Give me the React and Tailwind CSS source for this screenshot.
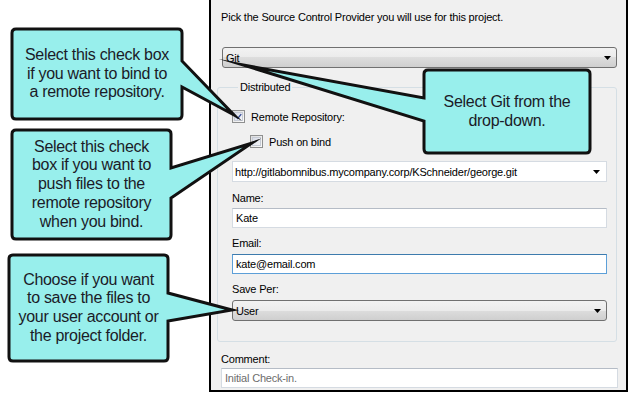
import React from "react";

const callouts = [
  { box: [12, 29, 182, 119], side: "right", a: 61, b: 87, tip: [234, 115], lines: ["Select this check box", "if you want to bind to", "a remote repository."] },
  { box: [12, 130, 171, 239], side: "right", a: 168, b: 198, tip: [252, 143], lines: ["Select this check", "box if you want to", "push files to the", "remote repository", "when you bind."] },
  { box: [9, 255, 168, 361], side: "right", a: 293, b: 321, tip: [232, 310], lines: ["Choose if you want", "to save the files to", "your user account or", "the project folder."] },
  { box: [424, 70, 590, 153], side: "left", a: 98, b: 121, tip: [243, 65], lines: ["Select Git from the", "drop-down."] },
];

function bubblePath({ box, side, a, b, tip }) {
  const [x1, y1, x2, y2] = box;
  const r = 4;
  const [tx, ty] = tip;
  if (side === "right") {
    return `M${x1 + r} ${y1} H${x2 - r} Q${x2} ${y1} ${x2} ${y1 + r} V${a} L${tx} ${ty} L${x2} ${b} V${y2 - r} Q${x2} ${y2} ${x2 - r} ${y2} H${x1 + r} Q${x1} ${y2} ${x1} ${y2 - r} V${y1 + r} Q${x1} ${y1} ${x1 + r} ${y1} Z`;
  }
  return `M${x1 + r} ${y1} H${x2 - r} Q${x2} ${y1} ${x2} ${y1 + r} V${y2 - r} Q${x2} ${y2} ${x2 - r} ${y2} H${x1 + r} Q${x1} ${y2} ${x1} ${y2 - r} V${b} L${tx} ${ty} L${x1} ${a} V${y1 + r} Q${x1} ${y1} ${x1 + r} ${y1} Z`;
}

function Arrow() {
  return (
    <svg width="7" height="4" viewBox="0 0 7 4" className="shrink-0">
      <path d="M0 0 H7 L3.5 4 Z" fill="#000" />
    </svg>
  );
}

function Dropdown({ value, className = "" }) {
  return (
    <div className={`flex items-center justify-between h-[21px] rounded-[3px] border border-[#707070] bg-[linear-gradient(#f2f2f2,#ebebeb_50%,#dddddd_50%,#cfcfcf)] pl-[3px] pr-[5px] ${className}`}>
      <span>{value}</span>
      <Arrow />
    </div>
  );
}

function TextBox({ value, className = "", border = "border-[#d5dbe2] border-t-[#b5bcc6]", textColor = "text-black" }) {
  return (
    <div className={`flex items-center h-[20px] bg-white border ${border} px-[3px] ${textColor} ${className}`}>
      {value}
    </div>
  );
}

function Checkbox({ checked }) {
  return (
    <div className="w-[13px] h-[13px] border border-[#8e8f8f] bg-[linear-gradient(135deg,#dcdcdc,#fbfbfb)] p-[1px] shrink-0">
      <div className="w-full h-full border border-[#c6cbd5] bg-[linear-gradient(135deg,#d7dbe6,#f4f6f8)] flex items-center justify-center">
        {checked && (
          <svg width="9" height="9" viewBox="0 0 9 9">
            <path d="M1 4.5 L3.5 7 L8 1.5" stroke="#3a4f97" strokeWidth="1.8" fill="none" />
          </svg>
        )}
      </div>
    </div>
  );
}

export default function App() {
  return (
    <div className="relative w-[629px] h-[394px] bg-white overflow-hidden font-['Liberation_Sans',Arial,sans-serif]">
      {/* Dialog panel */}
      <div className="ml-[209px] w-[419px] h-[392px] border-2 border-t-0 border-black bg-[#f0f0f0] pl-[6px] pr-[9px] text-[11px] leading-[14px] text-black tracking-[-0.2px]">
        <p className="pt-[10px] ml-[4px]">Pick the Source Control Provider you will use for this project.</p>
        <Dropdown value="Git" className="mt-[23px] ml-[5px]" />

        <fieldset className="mt-[12px] border border-[#d5dfe5] rounded-[3px] pl-[14px] pr-[9px] pb-[20px]">
          <legend className="ml-[6px] px-[2px]">Distributed</legend>
          <div className="flex items-center h-[13px] mt-[16px]">
            <Checkbox checked />
            <span className="ml-[6px]">Remote Repository:</span>
          </div>
          <div className="flex items-center h-[13px] mt-[12px] ml-[18px]">
            <Checkbox />
            <span className="ml-[6px]">Push on bind</span>
          </div>
          <div className="flex items-center justify-between h-[21px] mt-[13px] bg-white border border-[#d5dbe2] pl-[2px] pr-[6px]">
            <span>http://gitlabomnibus.mycompany.corp/KSchneider/george.git</span>
            <Arrow />
          </div>
          <p className="mt-[9px]">Name:</p>
          <TextBox value="Kate" className="mt-[3px]" />
          <p className="mt-[8px]">Email:</p>
          <TextBox value="kate@email.com" className="mt-[4px]" border="border-[#5c9fd8] border-t-[#3d7bad]" />
          <p className="mt-[8px]">Save Per:</p>
          <Dropdown value="User" className="mt-[4px]" />
        </fieldset>

        <p className="mt-[10px] ml-[4px]">Comment:</p>
        <TextBox value="Initial Check-in." className="mt-[2px] ml-[4px] mr-[-1px]" textColor="text-[#6d6d6d]" />
      </div>

      {/* Callout overlays */}
      <svg className="absolute inset-0 pointer-events-none" width="629" height="394" viewBox="0 0 629 394">
        {callouts.map((c, i) => (
          <path key={i} d={bubblePath(c)} fill="#98efec" stroke="#111" strokeWidth="3" strokeLinejoin="miter" strokeMiterlimit="20" />
        ))}
      </svg>
      {callouts.map((c, i) => {
        const [x1, y1, x2, y2] = c.box;
        return (
          <div
            key={i}
            className="absolute flex flex-col items-center justify-center text-[16px] leading-[18.7px] text-[#1b1b28] text-center tracking-[-0.3px]"
            style={{ left: x1, top: y1, width: x2 - x1, height: y2 - y1 }}
          >
            {c.lines.map((l) => (
              <span key={l} className="whitespace-nowrap">{l}</span>
            ))}
          </div>
        );
      })}
    </div>
  );
}
